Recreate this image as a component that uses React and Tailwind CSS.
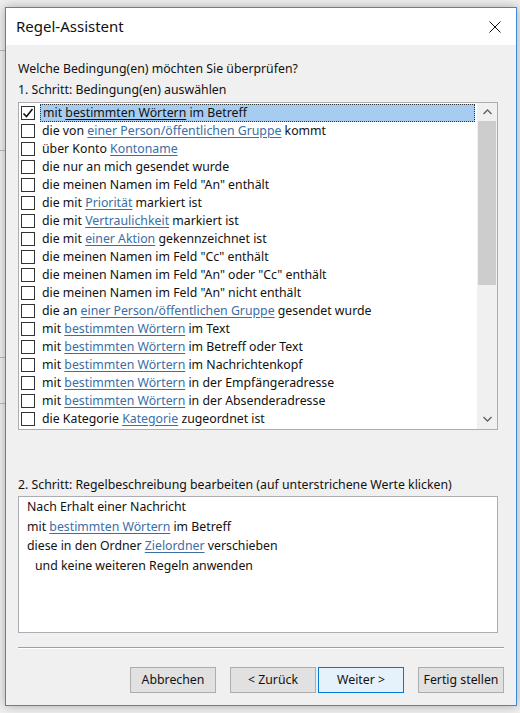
import React from "react";

const FONT = { fontFamily: '"Noto Sans", "Open Sans", sans-serif' };

const conditions = [
  "mit {bestimmten Wörtern} im Betreff",
  "die von {einer Person/öffentlichen Gruppe} kommt",
  "über Konto {Kontoname}",
  "die nur an mich gesendet wurde",
  'die meinen Namen im Feld "An" enthält',
  "die mit {Priorität} markiert ist",
  "die mit {Vertraulichkeit} markiert ist",
  "die mit {einer Aktion} gekennzeichnet ist",
  'die meinen Namen im Feld "Cc" enthält',
  'die meinen Namen im Feld "An" oder "Cc" enthält',
  'die meinen Namen im Feld "An" nicht enthält',
  "die an {einer Person/öffentlichen Gruppe} gesendet wurde",
  "mit {bestimmten Wörtern} im Text",
  "mit {bestimmten Wörtern} im Betreff oder Text",
  "mit {bestimmten Wörtern} im Nachrichtenkopf",
  "mit {bestimmten Wörtern} in der Empfängeradresse",
  "mit {bestimmten Wörtern} in der Absenderadresse",
  "die Kategorie {Kategorie} zugeordnet ist",
];

function RuleText({ text, selected }) {
  const parts = text.split(/[{}]/);
  return (
    <span className="whitespace-pre">
      {parts.map((p, i) =>
        i % 2 === 1 ? (
          <span
            key={i}
            className={`underline underline-offset-2 ${selected ? "text-[#111]" : "text-[#3b6ea5]"}`}
          >
            {p}
          </span>
        ) : (
          <span key={i}>{p}</span>
        )
      )}
    </span>
  );
}

function Checkbox({ checked }) {
  return (
    <div className="w-[14px] h-[14px] border border-[#333] bg-white flex items-center justify-center flex-shrink-0">
      {checked && (
        <svg width="12" height="12" viewBox="0 0 12 12">
          <path d="M1.5 6.5 L4.5 9.5 L10.5 2" fill="none" stroke="#111" strokeWidth="1.6" />
        </svg>
      )}
    </div>
  );
}

function Button({ children, primary }) {
  return (
    <button
      className={`w-[86px] h-[26px] text-[12.3px] text-[#111] border ${
        primary ? "bg-[#e5f1fb] border-[#0078d7]" : "bg-[#e1e1e1] border-[#adadad]"
      }`}
    >
      {children}
    </button>
  );
}

export default function App() {
  return (
    <div className="w-[520px] h-[713px] bg-[#f0f0f0] flex overflow-hidden text-[#111]" style={FONT}>
      {/* underlying window strip */}
      <div className="w-[5px] flex-shrink-0 flex flex-col overflow-hidden">
        <div className="h-[50px]" />
        <div className="h-px bg-[#bbb]" />
        <div className="h-[99px]" />
        <div className="h-px bg-[#bbb]" />
        <div className="h-[206px]" />
        <div className="h-px bg-[#bbb]" />
        <div className="h-[45px]" />
        <div className="h-px bg-[#bbb]" />
      </div>

      {/* dialog */}
      <div className="mt-[7px] w-[512px] h-[699px] flex-shrink-0 border border-[#3d88d6] bg-[#f0f0f0] flex flex-col shadow-[0_0_10px_rgba(0,0,0,0.3)]">
        <div className="h-[37px] bg-white flex items-center justify-between pl-[10px] pr-[15px]">
          <span className="text-[15px]">Regel-Assistent</span>
          <svg width="12" height="12" viewBox="0 0 12 12">
            <path d="M0.5 0.5 L11.5 11.5 M11.5 0.5 L0.5 11.5" stroke="#111" strokeWidth="1" />
          </svg>
        </div>

        <div className="flex-1 flex flex-col px-[12px] text-[12.3px]">
          <div className="mt-[16px] leading-[16px]">Welche Bedingung(en) möchten Sie überprüfen?</div>
          <div className="mt-[5px] leading-[16px]">1. Schritt: Bedingung(en) auswählen</div>

          <div className="mt-[4px] mr-[6px] h-[328px] border border-[#abadb3] bg-white flex">
            <div className="flex-1 flex flex-col pl-[2px] pt-[1px]">
              {conditions.map((c, i) => (
                <div key={i} className="h-[18px] flex items-center">
                  <Checkbox checked={i === 0} />
                  <div
                    className={`ml-[5px] h-[18px] flex items-center pl-[2px] whitespace-nowrap leading-[16px] ${
                      i === 0 ? "flex-1 bg-[#a6cdf0] border border-dotted border-[#333]" : ""
                    }`}
                  >
                    <RuleText text={c} selected={i === 0} />
                  </div>
                </div>
              ))}
            </div>
            <div className="w-[20px] bg-[#f0f0f0] flex flex-col ml-[2px]">
              <div className="h-[18px] flex items-center justify-center">
                <svg width="9" height="6" viewBox="0 0 9 6">
                  <path d="M0.5 5 L4.5 1 L8.5 5" fill="none" stroke="#606060" strokeWidth="1.3" />
                </svg>
              </div>
              <div className="mx-[1px] h-[164px] bg-[#cdcdcd]" />
              <div className="flex-1" />
              <div className="h-[20px] flex items-center justify-center">
                <svg width="9" height="6" viewBox="0 0 9 6">
                  <path d="M0.5 1 L4.5 5 L8.5 1" fill="none" stroke="#606060" strokeWidth="1.3" />
                </svg>
              </div>
            </div>
          </div>

          <div className="mt-[47px] leading-[16px]">
            2. Schritt: Regelbeschreibung bearbeiten (auf unterstrichene Werte klicken)
          </div>
          <div className="mt-[3px] mr-[6px] h-[137px] border border-[#abadb3] bg-white pl-[8px] leading-[19.6px]">
            <div>Nach Erhalt einer Nachricht</div>
            <div>
              mit <span className="underline underline-offset-2 text-[#3b6ea5]">bestimmten Wörtern</span> im Betreff
            </div>
            <div>
              diese in den Ordner <span className="underline underline-offset-2 text-[#3b6ea5]">Zielordner</span> verschieben
            </div>
            <div className="pl-[8px]">und keine weiteren Regeln anwenden</div>
          </div>

          <div className="mt-[14px] h-px bg-[#a0a0a0]" />
          <div className="h-px bg-white" />

          <div className="mt-[18px] flex justify-end">
            <Button>Abbrechen</Button>
            <div className="w-[14px]" />
            <Button>&lt; Zurück</Button>
            <div className="w-[2px]" />
            <Button primary>Weiter &gt;</Button>
            <div className="w-[14px]" />
            <Button>Fertig stellen</Button>
          </div>
        </div>
      </div>
    </div>
  );
}
